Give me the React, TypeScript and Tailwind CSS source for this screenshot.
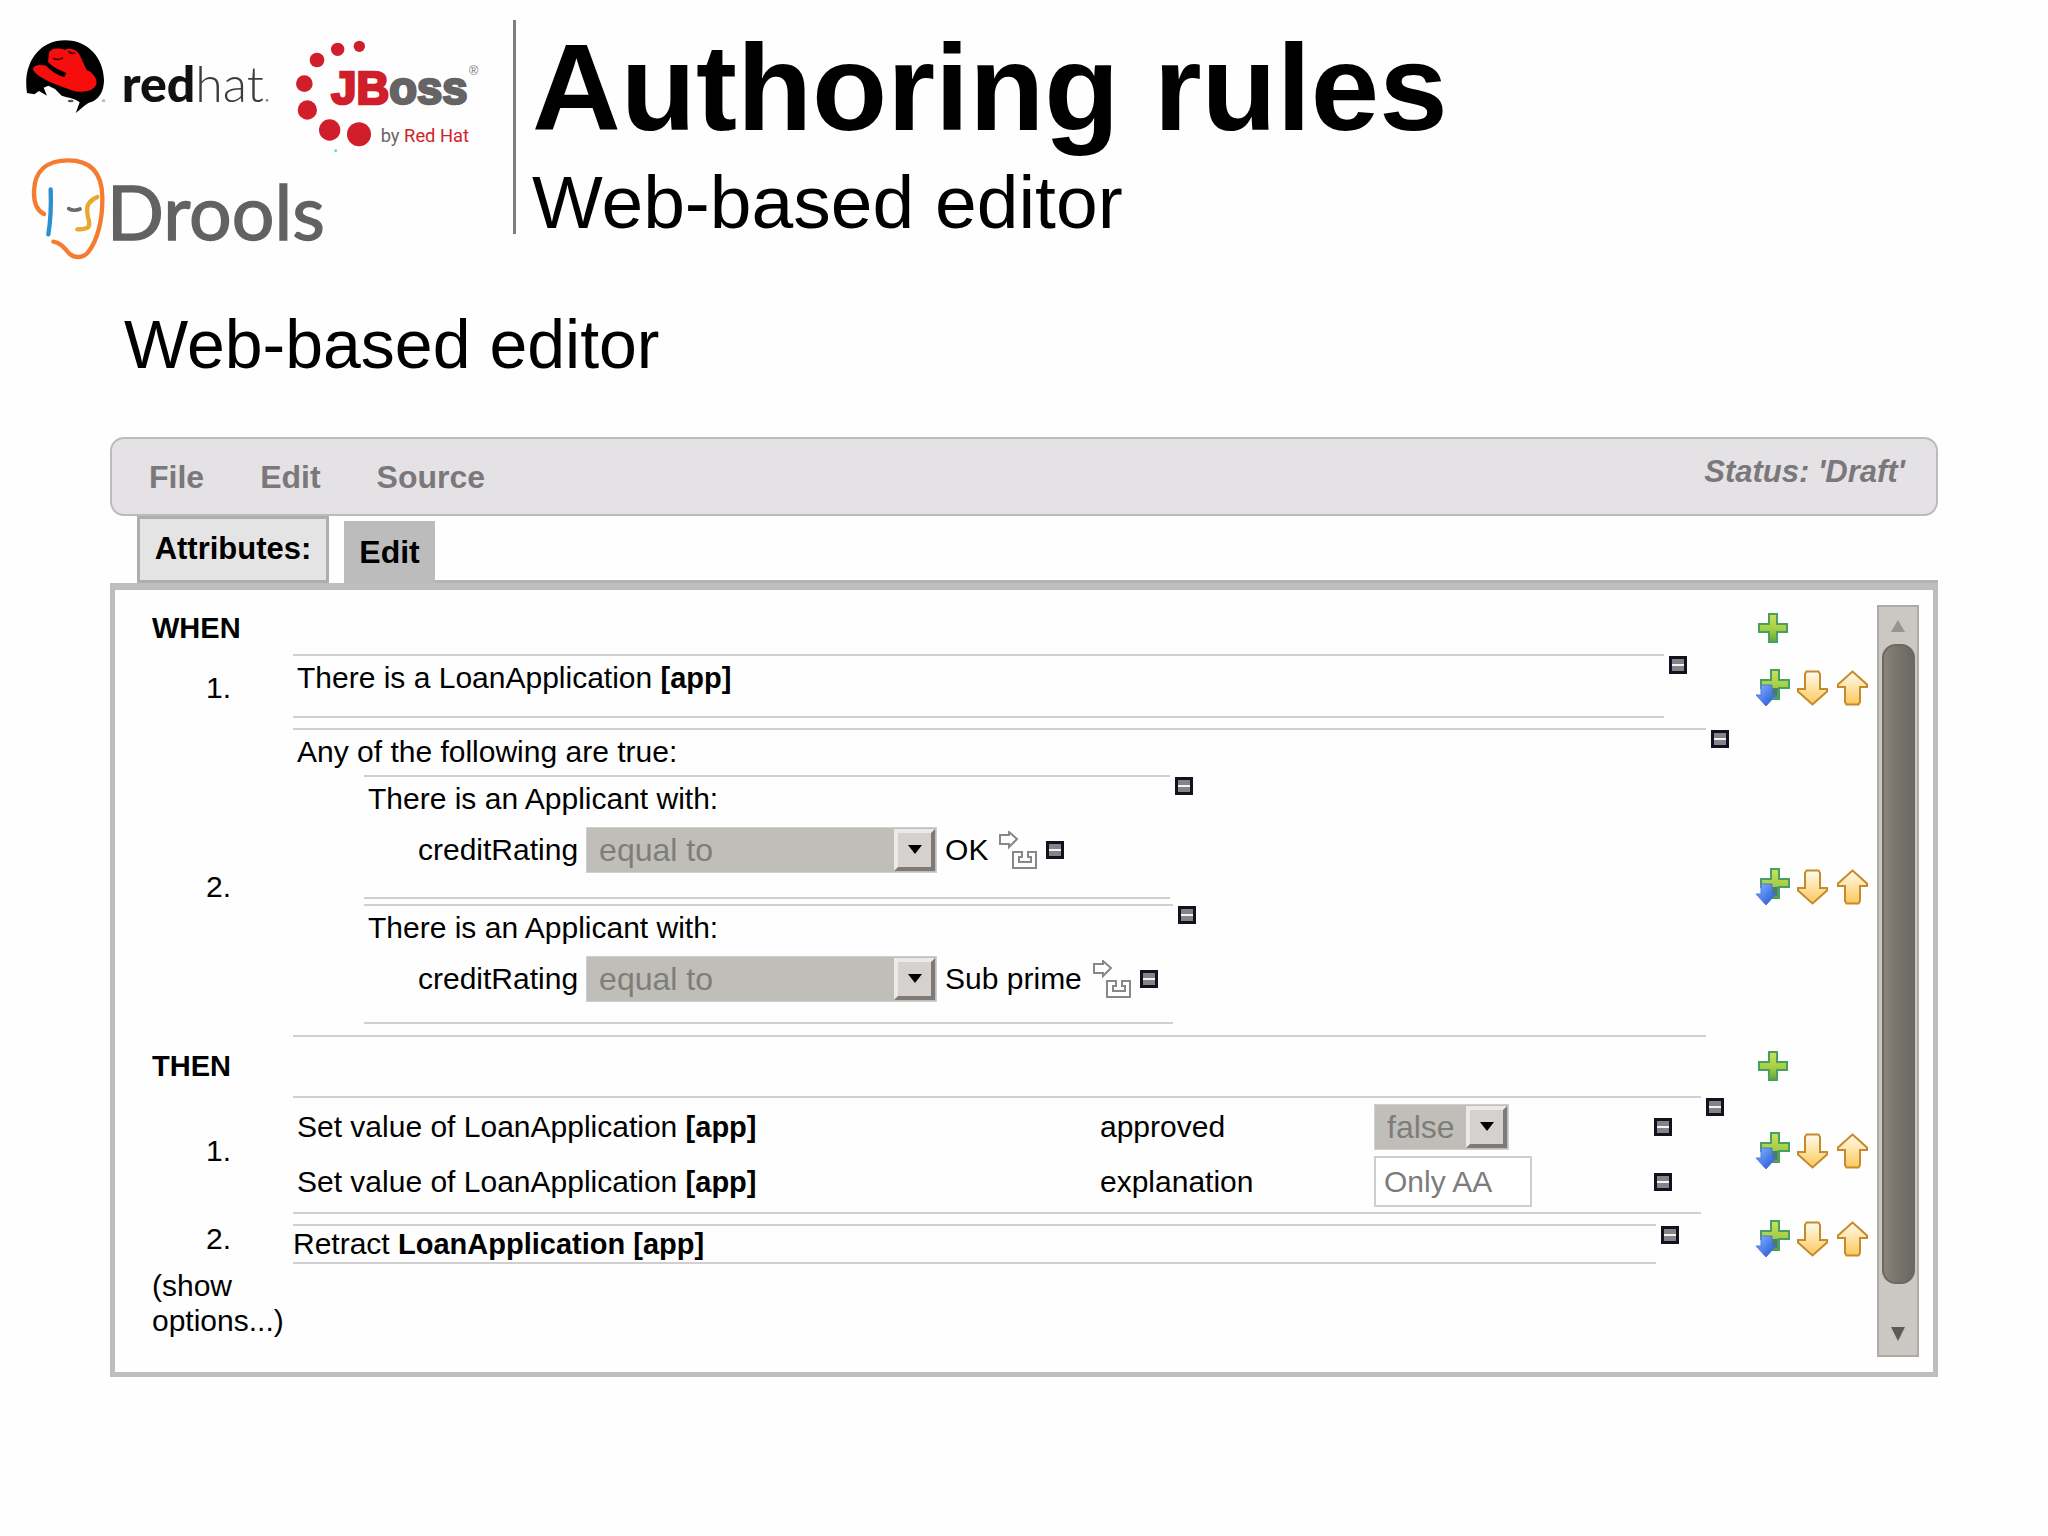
import React, { useState } from 'react';

const RedHatLogo = () => (
  <svg width="250" height="80" viewBox="70 50 750 240" role="img" aria-label="Red Hat">
    <path
      fill="#000"
      d="M82 218 C68 130 118 60 196 60 C268 60 312 116 313 180 C313 214 296 240 272 246 C256 252 244 266 228 279 L240 246 C230 236 206 232 186 226 L166 206 L146 196 L132 202 L142 226 L118 212 L104 222 Z"
    />
    <path
      fill="#f80d0d"
      d="M148 98 C152 84 176 82 196 88 C214 80 236 90 242 108 C250 126 256 140 262 150 C280 156 294 176 290 192 C284 212 248 222 212 208 C170 194 112 172 101 150 C98 138 110 130 140 136 C150 150 172 164 194 170 L200 158 C184 150 160 142 145 124 Z"
    />
    <path fill="none" stroke="#3a0505" strokeWidth="5" d="M160 114 Q176 122 190 112 M206 92 Q216 104 226 96" />
    <ellipse cx="213" cy="242" rx="9" ry="4" fill="#555" />
    <circle cx="312" cy="241" r="5" fill="#bbb" />
    <text x="366" y="245" fontSize="150" fill="#111" fontFamily="Lato, sans-serif">
      <tspan fontWeight="900">red</tspan><tspan fontWeight="300" fill="#3d3d3d">hat</tspan>
    </text>
    <circle cx="802" cy="240" r="4" fill="#888" />
  </svg>
);

const JBOSS_DOTS = [
  [1079, 78, 17],
  [1014, 87, 20],
  [952, 119, 22],
  [914, 190, 25],
  [923, 269, 29],
  [990, 329, 32],
  [1078, 342, 36],
];

const JBossLogo = () => (
  <svg width="190" height="120" viewBox="880 50 570 360" role="img" aria-label="JBoss by Red Hat">
    {JBOSS_DOTS.map(([cx, cy, r]) => (
      <circle key={cx} cx={cx} cy={cy} r={r} fill="#d01f2b" />
    ))}
    <circle cx="1008" cy="391" r="4" fill="#3fe0e0" />
    <text x="995" y="252" fontSize="136" fontWeight="700" strokeWidth="8" fontFamily='"Liberation Sans", sans-serif'>
      <tspan fill="#d01f2b" stroke="#d01f2b">JB</tspan><tspan fill="#666364" stroke="#666364">oss</tspan>
    </text>
    <text x="1408" y="164" fontSize="38" fill="#777" fontFamily='"Liberation Sans", sans-serif'>®</text>
    <text x="1143" y="365" fontSize="55" fill="#666" fontFamily="Roboto, sans-serif">
      by <tspan fill="#d01f2b">Red Hat</tspan>
    </text>
  </svg>
);

const DroolsLogo = () => (
  <svg width="300" height="108" viewBox="90 404 900 324" role="img" aria-label="Drools">
    <g fill="none" strokeWidth="13" strokeLinecap="round" strokeLinejoin="round">
      <path stroke="#f47b30" d="M132 581 C108 570 101 544 102 512 C104 450 142 420 205 420 C276 420 306 462 307 530 C308 600 292 662 264 696 C248 714 224 714 208 700 C192 682 180 666 160 664" />
      <path stroke="#2a90cf" d="M152 507 C154 560 152 600 145 642" />
      <path stroke="#e9a92c" d="M292 530 C268 540 258 556 262 578 C264 600 272 606 266 618 C260 628 246 626 232 627" />
      <path stroke="#6c6a6c" strokeWidth="11" d="M206 565 Q222 574 240 566" />
    </g>
    <text x="320" y="658" fontSize="226" fill="#636163" stroke="#636163" strokeWidth="4" fontFamily="Lato, sans-serif">Drools</text>
  </svg>
);

const PlusIcon = () => (
  <svg width="30" height="30" viewBox="0 0 30 30" aria-hidden="true">
    <defs>
      <linearGradient id="plusFill" x1="0" y1="0" x2="0" y2="1">
        <stop offset="0" stopColor="#c9e05a" />
        <stop offset="0.55" stopColor="#a5cf45" />
        <stop offset="1" stopColor="#5fa53a" />
      </linearGradient>
    </defs>
    <path d="M11 1h8v10h10v8H19v10h-8V19H1v-8h10z" fill="url(#plusFill)" stroke="#47a062" strokeWidth="2" />
  </svg>
);

const InsertBelowIcon = () => (
  <svg width="35" height="38" viewBox="0 0 35 38" aria-hidden="true">
    <defs>
      <linearGradient id="blueFill" x1="0" y1="0" x2="1" y2="1">
        <stop offset="0" stopColor="#8db6f7" />
        <stop offset="0.5" stopColor="#4f82ee" />
        <stop offset="1" stopColor="#2c50c0" />
      </linearGradient>
    </defs>
    <path d="M16 1h8v10h10v8H24v11h-8V19H6v-8h10z" fill="url(#plusFill)" stroke="#47a062" strokeWidth="2" />
    <path d="M17 19h6l-1 9h-5z" fill="#2d5f86" opacity="0.7" />
    <path d="M6 16h11v10h4L11 37 1 26h5z" fill="url(#blueFill)" stroke="#4b78dc" strokeWidth="1" />
  </svg>
);

const ArrowIcon = ({ up = false }: { up?: boolean }) => (
  <svg width="31" height="36" viewBox="0 0 31 36" aria-hidden="true">
    <defs>
      <linearGradient id="goldFill" x1="0" y1="0" x2="0" y2="1">
        <stop offset="0" stopColor="#fffbee" />
        <stop offset="1" stopColor="#fcc95a" />
      </linearGradient>
    </defs>
    <path
      d={
        up
          ? 'M15.500 1.500L30 14.500V17H23V32L21.500 34.500H9.500L8 32V17H1V14.500z'
          : 'M9.500 1.500H21.500L23 4V19H30V21.500L15.500 34.500L1 21.500V19H8V4z'
      }
      fill="url(#goldFill)"
      stroke="#c48a2c"
      strokeWidth="2"
    />
  </svg>
);

const InsertValueIcon = () => (
  <svg width="38" height="38" viewBox="0 0 38 38" fill="none" stroke="#8a878b" strokeWidth="2" aria-hidden="true">
    <path d="M1 4h9V1l8 7-8 8v-3H1z" />
    <path d="M14 21h9v5h-3v5h12v-5h-3v-5h8v16H14z" />
  </svg>
);

const RemoveButton = ({ label }: { label: string }) => (
  <button aria-label={label} className="block h-[18px] w-[18px] shrink-0 cursor-pointer">
    <svg width="18" height="18" viewBox="0 0 18 18" aria-hidden="true">
      <rect x="1.500" y="1.500" width="15" height="15" fill="#858386" stroke="#14101f" strokeWidth="3" />
      <rect x="3" y="8" width="12" height="2" fill="#f4f4f4" />
    </svg>
  </button>
);

const RowActions = () => (
  <div className="flex w-[122px] shrink-0 items-center">
    <button aria-label="Insert below" className="mr-[7px] cursor-pointer"><InsertBelowIcon /></button>
    <button aria-label="Move down" className="mr-[9px] cursor-pointer"><ArrowIcon /></button>
    <button aria-label="Move up" className="cursor-pointer"><ArrowIcon up /></button>
  </div>
);

interface DropdownProps {
  label: string;
  options: string[];
  widthClass: string;
}

// Motif-style drop-down: flat grey field with a raised arrow button
const Dropdown = ({ label, options, widthClass }: DropdownProps) => (
  <div className={`relative h-[46px] shrink-0 ${widthClass}`}>
    <select
      aria-label={label}
      className="block h-full w-full appearance-none border border-[#d2cfcc] bg-[#c0beb9] pl-3 text-[32px] leading-9 text-[#7f7d79]"
    >
      {options.map(o => <option key={o}>{o}</option>)}
    </select>
    <span className="pointer-events-none absolute top-[2px] right-[2px] flex h-[42px] w-[41px] items-center justify-center border-4 border-t-[#ece9e8] border-r-[#7d7a78] border-b-[#7d7a78] border-l-[#ece9e8] bg-[#d5d1ce]">
      <svg width="14" height="10" viewBox="0 0 14 10" aria-hidden="true"><path d="M0 0h14L7 9z" fill="#000" /></svg>
    </span>
  </div>
);

const Bound = ({ children }: { children: React.ReactNode }) => (
  <b className="text-[29px]">{children}</b>
);

const SectionHeader = ({ title }: { title: string }) => (
  <div className="flex h-9 items-center">
    <h3 className="flex-1 text-[29px] leading-9 font-bold">{title}</h3>
    <div className="w-[122px] pl-[3px]">
      <button aria-label={`Add to ${title}`} className="block cursor-pointer"><PlusIcon /></button>
    </div>
  </div>
);

interface RuleRowProps {
  index: number;
  className: string;
  endClass: string;
  boxClass: string;
  children: React.ReactNode;
}

// className spaces the row as a whole, endClass pads the box and its remove button
const RuleRow = ({ index, className, endClass, boxClass, children }: RuleRowProps) => (
  <div className={`flex ${className}`}>
    <span className="flex w-[141px] shrink-0 items-center pl-[54px]">{index}.</span>
    <div className={`flex min-w-0 flex-1 items-start gap-[5px] ${endClass}`}>
      <div className={`min-w-0 flex-1 border-y-2 border-[#d1cfd2] ${boxClass}`}>{children}</div>
      <div className="pt-[2px]"><RemoveButton label={`Remove item ${index}`} /></div>
    </div>
    <RowActions />
  </div>
);

interface ApplicantProps {
  value: string;
  className: string;
  boxClass: string;
}

const ApplicantPattern = ({ value, className, boxClass }: ApplicantProps) => (
  <div className={`ml-[71px] flex items-start gap-[5px] ${className}`}>
    <div className={`border-y-2 border-[#d1cfd2] pt-1 ${boxClass}`}>
      <p className="pl-1">There is an Applicant with:</p>
      <div className="mt-[10px] flex items-center pl-[54px]">
        <span>creditRating</span>
        <div className="px-2">
          <Dropdown label="creditRating" options={['equal to', 'not equal to']} widthClass="w-[351px]" />
        </div>
        <span>{value}</span>
        <button aria-label="Edit value" className="mr-[9px] ml-[11px] cursor-pointer"><InsertValueIcon /></button>
        <RemoveButton label="Remove restriction" />
      </div>
    </div>
    <div className="pt-[2px]"><RemoveButton label="Remove pattern" /></div>
  </div>
);

const FieldRow = ({ field, children }: { field: string; children: React.ReactNode }) => (
  <div className="grid grid-cols-[803fr_274fr_280fr_18px] items-center">
    <span>Set value of LoanApplication <Bound>[app]</Bound></span>
    <span>{field}</span>
    {children}
    <RemoveButton label={`Remove ${field}`} />
  </div>
);

const ScrollBar = () => (
  <div className="my-[15px] mr-[14px] flex w-[42px] shrink-0 flex-col items-center border-2 border-[#aeaba7] bg-[#cbc8c3]">
    <button aria-label="Scroll up" className="flex h-[37px] w-full items-center justify-center">
      <svg width="14" height="12" viewBox="0 0 14 12" aria-hidden="true"><path d="M7 0l7 12H0z" fill="#969390" /></svg>
    </button>
    <div className="w-[33px] flex-1 rounded-[14px] border-2 border-[#6b6763] bg-linear-to-r from-[#8a837b] via-[#78726b] to-[#6c6762]" />
    <button aria-label="Scroll down" className="flex h-[71px] w-full items-end justify-center pb-[14px]">
      <svg width="14" height="14" viewBox="0 0 14 14" aria-hidden="true"><path d="M0 0h14L7 14z" fill="#5d5a58" /></svg>
    </button>
  </div>
);

export default function App() {
  const [explanation, setExplanation] = useState('Only AA');

  return (
    <div className="min-h-screen bg-[#fefefe] pb-10 font-['Liberation_Sans',Arial,sans-serif] text-black">
      <header className="flex pt-5">
        <div className="w-[513px] shrink-0">
          <div className="flex items-start pt-[17px] pl-[23px]">
            <RedHatLogo />
            <div className="pl-5"><JBossLogo /></div>
          </div>
          <div className="-mt-[2px] pl-[30px]"><DroolsLogo /></div>
        </div>
        <div className="h-[214px] border-l-3 border-[#7f7d7f] pl-4">
          <h1 className="text-[123px] leading-[136px] font-bold">Authoring rules</h1>
          <p className="mt-[14px] text-[75px] leading-16">Web-based editor</p>
        </div>
      </header>

      <main className="px-[110px]">
        <h2 className="mt-[41px] pl-[14px] text-[68px] leading-20">Web-based editor</h2>

        <nav className="mt-[53px] flex h-[79px] items-center justify-between rounded-[14px] border-2 border-[#bcbabd] bg-[#e4e2e4] pr-[31px] pl-[37px] font-bold text-[#7a787b]">
          <div className="flex gap-[56px] text-[32px] leading-9">
            <button className="cursor-pointer">File</button>
            <button className="cursor-pointer">Edit</button>
            <button className="cursor-pointer">Source</button>
          </div>
          <span className="pb-[10px] text-[31px] leading-9 italic">Status: 'Draft'</span>
        </nav>

        <div className="flex h-[67px] items-end pl-[27px] font-bold">
          <button className="h-full w-[192px] cursor-pointer border-3 border-[#afaea9] bg-[#e5e4e4] text-[31px]">Attributes:</button>
          <button className="ml-[15px] h-[62px] w-[91px] cursor-pointer bg-[#bdbcbd] text-[32px]">Edit</button>
          <div className="h-[3px] flex-1 bg-[#b5b5b0]" />
        </div>

        <div className="flex border-5 border-t-7 border-[#bfbdbf] bg-[#fefefe] text-[30px] leading-9">
          <div className="min-w-0 flex-1 pt-5 pb-[34px] pl-[37px]">
            <SectionHeader title="WHEN" />
            <RuleRow index={1} className="mt-2" endClass="pr-[68px] pb-1" boxClass="pt-1 pb-5 pl-1">
              There is a LoanApplication <Bound>[app]</Bound>
            </RuleRow>
            <RuleRow index={2} className="mt-[6px]" endClass="pr-[26px] pb-2" boxClass="pt-1 pb-[11px]">
              <p className="pl-1">Any of the following are true:</p>
              <ApplicantPattern value="OK" className="mt-[5px]" boxClass="w-[806px] pb-6" />
              <ApplicantPattern value="Sub prime" className="mt-[5px]" boxClass="w-[809px] pb-5" />
            </RuleRow>

            <div className="mt-[3px]"><SectionHeader title="THEN" /></div>
            <RuleRow index={1} className="mt-1" endClass="pt-2 pr-[31px]" boxClass="pt-[6px] pr-[29px] pb-[5px] pl-1">
              <FieldRow field="approved">
                <Dropdown label="approved" options={['false', 'true']} widthClass="w-[135px]" />
              </FieldRow>
              <div className="mt-[6px]">
                <FieldRow field="explanation">
                  <input
                    aria-label="explanation"
                    value={explanation}
                    onChange={e => setExplanation(e.target.value)}
                    className="h-[51px] w-[158px] border-2 border-[#cfcdcf] bg-white px-2 text-[#7d7b7e]"
                  />
                </FieldRow>
              </div>
            </RuleRow>
            <RuleRow index={2} className="" endClass="pt-[10px] pr-[76px]" boxClass="">
              Retract <Bound>LoanApplication [app]</Bound>
            </RuleRow>
            <button className="mt-1 block w-[141px] cursor-pointer text-left leading-[35px]">(show options...)</button>
          </div>
          <ScrollBar />
        </div>
      </main>
    </div>
  );
}
